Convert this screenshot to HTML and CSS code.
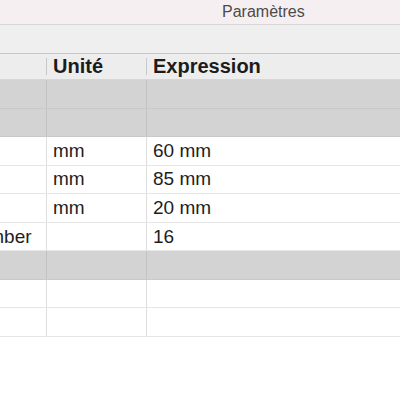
FILE: index.html
```html
<!DOCTYPE html>
<html lang="fr">
<head>
<meta charset="utf-8">
<link rel="stylesheet" href="styles.css">
</head>
<body>
<div class="window">
  <div class="titlebar"><span class="title">Paramètres</span></div>
  <div class="toolbar"></div>
  <div class="table">
    <div class="row header">
      <div class="cell"></div>
      <div class="cell sep">Unité</div>
      <div class="cell sep">Expression</div>
    </div>
    <div class="row group"><div class="cell"></div><div class="cell"></div><div class="cell"></div></div>
    <div class="row group"><div class="cell"></div><div class="cell"></div><div class="cell"></div></div>
    <div class="row"><div class="cell"></div><div class="cell">mm</div><div class="cell">60 mm</div></div>
    <div class="row"><div class="cell"></div><div class="cell">mm</div><div class="cell">85 mm</div></div>
    <div class="row"><div class="cell"></div><div class="cell">mm</div><div class="cell">20 mm</div></div>
    <div class="row"><div class="cell">Number</div><div class="cell"></div><div class="cell">16</div></div>
    <div class="row group"><div class="cell"></div><div class="cell"></div><div class="cell"></div></div>
    <div class="row"><div class="cell"></div><div class="cell"></div><div class="cell"></div></div>
    <div class="row"><div class="cell"></div><div class="cell"></div><div class="cell"></div></div>
  </div>
</div>
</body>
</html>
```
FILE: styles.css
```css
html, body {
  margin: 0;
  padding: 0;
  background: #ffffff;
  overflow: hidden;
}
.window {
  width: 400px;
  height: 400px;
  font-family: "Liberation Sans", Arial, sans-serif;
  color: #1e1e1e;
  overflow: hidden;
}
.titlebar {
  height: 25px;
  background: #f6eff1;
  border-bottom: 1px solid #d9d6d7;
  box-sizing: border-box;
  display: flex;
  align-items: center;
  padding-left: 222px;
}
.title {
  font-size: 16px;
  color: #4d4a4b;
}
.toolbar {
  height: 29px;
  background: #efefef;
  border-bottom: 1px solid #c6c6c6;
  box-sizing: border-box;
}
.table {
  margin-left: -42px;
  width: 442px;
}
.row {
  display: grid;
  grid-template-columns: 89px 100px 1fr;
  height: 28.56px;
  box-sizing: border-box;
  border-bottom: 1px solid #e6e6e6;
  background: #ffffff;
}
.cell {
  display: flex;
  align-items: center;
  padding-left: 6px;
  font-size: 19px;
  white-space: nowrap;
  overflow: hidden;
  border-right: 1px solid #dedede;
}
.cell:last-child {
  border-right: none;
}
.row.header {
  height: 26px;
  background: #ededed;
  border-bottom: 1px solid #d6d6d6;
}
.row.header .cell {
  border-right: none;
  font-weight: bold;
  font-size: 20px;
  color: #1c1c1c;
  overflow: visible;
  position: relative;
}
.row.header .cell.sep::before {
  content: "";
  position: absolute;
  left: -1px;
  top: 4px;
  bottom: 4px;
  width: 1px;
  background: #c8c8c8;
}
.row.header .cell:first-child {
  padding-left: 0;
}
.row.group {
  background: #d3d3d3;
  border-bottom: 1px solid #c9c9c9;
}
.row.group .cell {
  border-right-color: #c2c2c2;
}
```
